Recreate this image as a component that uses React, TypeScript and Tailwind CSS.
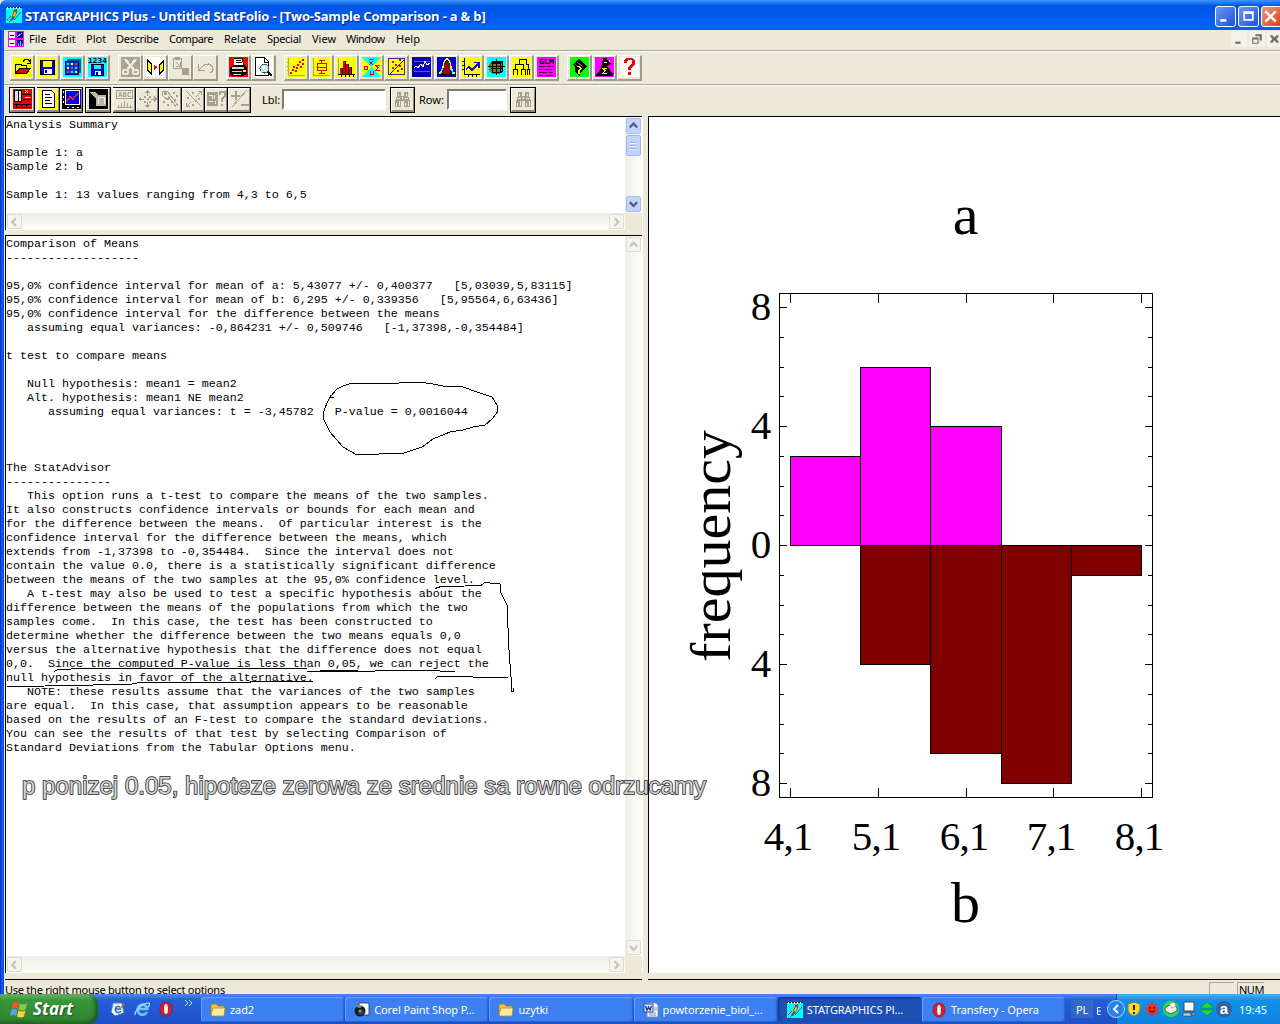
import React from "react";

type Kids = { children?: React.ReactNode };

/* ---------- small drawing helpers ---------- */
const S = ({ d, c = "#000", w = 1 }: { d: string; c?: string; w?: number }) => (
  <path d={d} fill="none" stroke={c} strokeWidth={w} />
);
const F = ({ d, c = "#000" }: { d: string; c?: string }) => <path d={d} fill={c} />;
const R = ({ x, y, w, h, c }: { x: number; y: number; w: number; h: number; c: string }) => (
  <rect x={x} y={y} width={w} height={h} fill={c} />
);
const Tiny = ({ x, y, w, c = "#000", t }: { x: number; y: number; w: number; c?: string; t: string }) => (
  <text x={x} y={y} textLength={w} lengthAdjust="spacingAndGlyphs" fontSize="7" fontWeight="bold" fontFamily="'DejaVu Sans Mono',monospace" fill={c}>{t}</text>
);

const Icon = ({ children, bg }: Kids & { bg?: string }) => (
  <svg width="19" height="20" viewBox="0 0 19 20" shapeRendering="crispEdges" className="block shrink-0">
    {bg && <rect width="19" height="20" fill={bg} />}
    {children}
  </svg>
);

const Logo = () => (
  <svg width="16" height="16" viewBox="0 0 16 16" className="block shrink-0">
    <rect width="16" height="16" fill="#00ffff" />
    <path d="M0 0h16v1H0z" fill="#222" />
    <path d="M1 0h1v2H1zM4 0h1v2H4zM7 0h1v2H7zM10 0h1v2h-1zM13 0h1v2h-1z" fill="#fff" />
    <path d="M1 13l4-4M3 15l5-4M8 13l7-8" stroke="#067" fill="none" />
    <path d="M6 10L8 3l3-1v4l-3 5z" fill="#e81000" />
    <path d="M7 9l2-5 1 2-2 5z" fill="#ffe000" />
    <path d="M4 13l3-4 2 1-3 4z" fill="#555" />
  </svg>
);

const g = "#a5a190";

/* ---------- main toolbar icons ---------- */
const fileIcons = [
  <Icon bg="#ffff00"><F d="M2 17V7h6l1 1h5v4H6z" /><F d="M3 14V8h4l1 1h5v3H6z" c="#ffff00" /><F d="M2 17l4-6h12l-4 6z" /><F d="M4 16l3-4h9l-3 4z" c="#f00000" /><S d="M10 4.500l2-2h3l2 2M17.500 2v4h-4" /></Icon>,
  <Icon bg="#ffff00"><R x={2} y={3} w={15} h={15} c="#000" /><R x={3} y={4} w={13} h={13} c="#0000f0" /><R x={5} y={4} w={9} h={6} c="#ffff00" /><R x={6} y={12} w={8} h={5} c="#fff" /><R x={7} y={13} w={2} h={3} c="#0000a0" /></Icon>,
  <Icon bg="#00ffff"><R x={4} y={2} w={14} h={14} c="#006090" /><R x={2} y={4} w={14} h={14} c="#000080" /><R x={3} y={5} w={12} h={12} c="#0030e0" />
    {[0, 1, 2].map((r) => [0, 1, 2].map((k) => <R key={r + "-" + k} x={4 + k * 4} y={6 + r * 4} w={2} h={2} c={["#00f0ff", "#ffff00", "#ff3030"][(r + k) % 3]} />))}</Icon>,
  <Icon bg="#00ffff"><Tiny x={0} y={5.5} w={19} t="1234" /><R x={3} y={7} w={13} h={12} c="#000" /><R x={4} y={8} w={11} h={10} c="#0000f0" /><R x={6} y={8} w={7} h={4} c="#00ffff" /><R x={7} y={14} w={6} h={4} c="#fff" /><R x={8} y={15} w={2} h={3} c="#0000a0" /></Icon>,
];

const editIcons = [
  <Icon><R x={0} y={0} w={19} h={20} c="#aaa696" /><S d="M4 2l9 11M15 2L6 13" c="#ece9d8" w={2.5} /><circle cx="4.500" cy="15" r="2.500" stroke="#ece9d8" fill="none" strokeWidth="2" /><circle cx="14.500" cy="15" r="2.500" stroke="#ece9d8" fill="none" strokeWidth="2" /></Icon>,
  <Icon bg="#fff"><F d="M1 2l5 5v11l-5-4zM18 2l-5 5v11l5-4z" /><F d="M2 5l3 3v7l-3-2zM17 5l-3 3v7l3-2z" c="#ffff00" /><F d="M8 8l4 2-4 3z" c="#f00" /></Icon>,
  <Icon><S d="M2.500 1.500h8v10h-8zM4.500.500h4v2h-4zM5 5l4 4M9 5v4H5" c={g} /><R x={11} y={11} w={7} h={7} c={g} /></Icon>,
  <Icon><S d="M2.500 7v6.500H9M3 13l5-5 5-1 3 2 1 3-1 3-2 1" c={g} w={1.3} /></Icon>,
];

const printIcons = [
  <Icon bg="#ff0000"><F d="M5 2l8-1 2 8H5z" c="#fff" /><S d="M5 2l8-1 2 8M7 4l5-1M7 6l6-1" /><F d="M1 11l4-3h11l2 3v6l-4 2H3l-2-3z" /><F d="M3 10h12v2H3zM3 14h10v1H3zM4 17h8v1H4z" c="#d8d4c8" /><R x={14} y={13} w={3} h={2} c="#ffff00" /></Icon>,
  <Icon bg="#fff"><S d="M1.500.500h9l4 4v14h-13zM10.500 1v4h4" /><circle cx="10.500" cy="11.500" r="4.500" fill="#c0f0f0" stroke="#555" /><circle cx="9.500" cy="10.500" r="1.500" fill="#fff" /><S d="M14 15l4 4" w={2} /></Icon>,
];

const Y = "#ffff00";
const plotIcons = [
  <Icon bg={Y}><S d="M1.500 1v17.500H18M0 5h2M0 9h2M0 13h2" c={g} />{[[3, 15], [5, 12], [8, 13], [6, 9], [9, 10], [10, 7], [13, 9], [12, 4], [15, 6], [15, 2]].map(([x, y], i) => <R key={i} x={x} y={y} w={2} h={2} c="#e80000" />)}</Icon>,
  <Icon bg={Y}><S d="M1.500 1v17.500H18" c={g} /><S d="M5.500 6.500h9v7h-9zM5 10.500h10M9.500 3v4M9.500 14v3M7 3.500h6M7 16.500h6" c="#e80000" /></Icon>,
  <Icon bg={Y}><R x={3} y={11} w={3} h={6} c="#e00000" /><R x={6} y={4} w={3} h={13} c="#e00000" /><R x={9} y={7} w={3} h={10} c="#e00000" /><R x={12} y={10} w={3} h={7} c="#e00000" /><S d="M1.500 1v17" c={g} /><S d="M1 17.500h17M5.500 11v6M8.500 4v13M11.500 7v10M14.500 10v7M4.500 18v2M8.500 18v2M12.500 18v2M16.500 18v2" /></Icon>,
  <Icon bg="#00ffff"><F d="M0 0l9 10L0 20zM19 0l-9 10 9 10z" c={Y} /><S d="M7 2.500h5M7 4l4 4M11 4L7 8M1.500 9.500h4v3h-3v-3M18 8.500h-4l2 2-2 3h4M8.500 14v5M8 17.500h3.500V14" c="#e80000" /></Icon>,
  <Icon bg={Y}><S d="M1.500 1.500h16v16h-16z" c="#303090" /><S d="M3 17L17 3" c="#101010" />{[[5, 4], [8, 7], [12, 2], [5, 10], [12, 8], [14, 11], [10, 13]].map(([x, y], i) => <R key={i} x={x} y={y} w={2} h={2} c="#e80000" />)}</Icon>,
  <Icon bg="#0000c8"><S d="M2 4.500h16M2 14.500h16" c="#ff2020" /><S d="M2 11l2-2 2 2 3-4 2 3 2-6 2 4 3-2" c="#fff" /><S d="M1.500 1v17.500H18M5.500 18v2M9.500 18v2M13.500 18v2" /></Icon>,
  <Icon bg="#0000d8"><F d="M6 17v-6l2-5 2-2 2 2 1 5v6z" c="#a00000" /><S d="M2 16h2l2-6 1-5 2-3h2l2 3 1 5 2 6h2" c={Y} w={1.3} /><S d="M3 16l3-5M16 16l-3-5" c="#00ffff" /><S d="M1 17.500h17M4.500 18v2M8.500 18v2M12.500 18v2M16.500 18v2" /></Icon>,
  <Icon bg={Y}><S d="M2.500 1v16.500H18M0 4.500h2M0 8.500h2M0 12.500h2M6.500 18v2M10.500 18v2M14.500 18v2" /><S d="M4 12l3-2 3 3 6-6M12 5.500h5v5" c="#1010d0" w={1.6} /></Icon>,
  <Icon bg="#00ffff"><F d="M5 4h9l2 3v8l-4 2H5l-3-3V7z" c="#808000" /><S d="M5.500 6.500h8v9h-8zM3.500 5.500h10l2-1M15.500 4v10l-2 2M4 11.500h12M9.500 2v16M1 9.500h17M5.500 6v-2h9" /></Icon>,
  <Icon bg={Y}><S d="M7.500 8V2.500h7V8M3.500 12V7.500h8V12M1.500 18v-5.500h4V18M9.500 18v-5.500h4V18M14.500 7.500h2v5M15.500 18v-5.500h2V18" /></Icon>,
  <Icon bg="#ff00ff"><Tiny x={2} y={6.5} w={15} t="GLM" /><S d="M2 9.500h6M10 9.500h7M2 12.500h3M7 12.500h8M2 15.500h8M12 15.500h4M2 18.500h4M8 18.500h8" c="#400040" /></Icon>,
];

const helpIcons = [
  <Icon bg="#00ff00"><F d="M2 8l7-6 8 7-7 7v3l-5-4V9z" /><S d="M7 5l6 5M5 7l3 3" c="#606060" /><S d="M7 9.500h2l2 2-2 2v3" c={Y} w={1.4} /></Icon>,
  <Icon bg="#ff00ff"><F d="M8 1h4l1 3 3 3-4 2 3 4 3 4v2H1v-2l4-4 2-5z" /><S d="M12 11.500H8l2 2-2 3h4" c={Y} /><S d="M9 5.500h3M14.500 3v2" c="#fff" /></Icon>,
  <Icon bg="#fff"><F d="M4 6V3l2-2h6l3 2v5l-4 3v2H8v-3l4-3V4l-1-1H8L7 4v2zM8 15h3v3H8z" c="#f00000" /></Icon>,
];

/* ---------- analysis toolbar icons ---------- */
const analysisIcons = [
  <Icon bg="#e00000"><R x={1} y={1} w={8} h={12} c="#ddd" /><S d="M1.500 1.500h7v11h-7zM5.500 2v10M10 5.500h8M10 10.500h8M1 15.500h17M3.500 15v4M8.500 15v4M13.500 15v4M4 18.500h3M9 18.500h3M15 18.500h3" /><S d="M12 1l3 3M15 1l-3 3M12 8h5" c={Y} /></Icon>,
  <Icon bg={Y}><F d="M3 1h10l3 3v15H3z" c="#fff" /><S d="M3.500 1.500h9l3 3v14h-12zM6 5.500h5M6 8.500h7M6 11.500h5M6 14.500h7" /></Icon>,
  <Icon bg="#0000f0"><S d="M3.500 1v14.500H18M3.500 1.500h14v14" c="#fff" /><R x={0} y={0} w={3} h={20} c="#000" /><R x={0} y={16} w={19} h={4} c="#000" /><S d="M1.500 2v2M1.500 7v2M1.500 12v2M5 18.500h2M10 18.500h2M15 18.500h2" c="#fff" /><S d="M5 12l3-4 3 2 5-6" c="#ff2020" w={1.6} /></Icon>,
  <Icon bg="#000"><F d="M1 3h6l2 3h8v11H7v-8L3 6z" c="#bbb8aa" /><S d="M9 8.500h6v6M9 8v7" c="#eee" /></Icon>,
  <Icon><S d="M1.500 1.500h16v8h-16z" c={g} /><Tiny x={3} y={8} w={13} t="ABC" c={g} /><S d="M2 18.500h16M3.500 16v2M6.500 14v4M9.500 12v6M12.500 14v4M15.500 16v2" c={g} /></Icon>,
  <Icon><F d="M9 1l3 3H7zM9 19l3-3H7zM0 10l3-3v6zM19 10l-3-3v6zM9 4h1v3H9zM9 13h1v3H9zM3 10h3v1H3zM13 10h3v1h-3zM6 7h2v2H6zM11 7h2v2h-2zM6 12h2v2H6zM11 12h2v2h-2zM9 9h2v2H9z" c={g} /></Icon>,
  <Icon><S d="M1 2h5l4 5-3 4-5-4zM7 7l8 11M10 7l7 10" c={g} /><F d="M3 3h3v3H3zM2 12h2v2H2zM6 15h2v2H6zM12 3h2v2h-2zM15 6h2v2h-2zM13 10h2v2h-2zM10 12h2v2h-2zM5 9h2v2H5z" c={g} /></Icon>,
  <Icon><S d="M2 2l15 15M2 17.500h4M2.500 14v4M3 17l4-4M17.500 2v4M14 2.500h4M12 8l5-5" c={g} /><F d="M8 3h2v2H8zM14 9h2v2h-2zM3 8h2v2H3zM8 15h2v2H8zM11 11h2v2h-2z" c={g} /></Icon>,
  <Icon><R x={0} y={3} w={11} h={14} c={g} /><S d="M2 6.500h3v3M7.500 6v4M2 12.500h4M8.500 12v3" c="#ece9d8" /><S d="M13 6V3h5v4l-3 3v3M15 15v2" c={g} w={2} /></Icon>,
  <Icon><S d="M5.500 2v9M1 6.500h9M11 15.500h8" c={g} w={2} /><S d="M17 1L2 18" c={g} /></Icon>,
];

const Binoculars = () => (
  <Icon><F d="M4 3h4v4h3V3h4v4l2 5v6h-6v-6H8v6H2v-6l2-5z" c={g} /><S d="M5.500 5v2M4 9.500h3M3.500 14v3M6.500 12v5M13.500 5v2M12 9.500h3M12.500 14v3M15.500 12v5M9.500 8v2" c="#ece9d8" /></Icon>
);

const ToolButton = ({ children }: Kids) => (
  <div className="flex h-[26px] w-[25px] items-center justify-center border-t border-r-2 border-b-2 border-l border-t-white border-r-[#9d9a8b] border-b-[#9d9a8b] border-l-white">
    {children}
  </div>
);

const FlatButton = ({ children, className = "w-[23px]" }: Kids & { className?: string }) => (
  <div className={`flex h-[26px] shrink-0 items-center justify-center overflow-hidden border-y border-r border-black ${className}`}>
    <div className="flex h-full w-full items-center justify-center border-t border-r border-b-2 border-l border-t-white border-r-[#8c897b] border-b-[#8c897b] border-l-white">
      {children}
    </div>
  </div>
);

const menus: [string, string][] = [
  ["File", "w-[27px]"], ["Edit", "w-[30px]"], ["Plot", "w-[30px]"], ["Describe", "w-[53px] tracking-[-0.3px]"], ["Compare", "w-[55px] tracking-[-0.5px]"],
  ["Relate", "w-[43px]"], ["Special", "w-[45px] tracking-[-0.3px]"], ["View", "w-[34px]"], ["Window", "w-[50px] tracking-[-0.5px]"], ["Help", "w-[30px]"],
];

/* ---------- scrollbars ---------- */
type Dir = "up" | "down" | "left" | "right";
const chevrons: Record<Dir, string> = {
  up: "M4 9.500l4-4 4 4", down: "M4 6l4 4 4-4", left: "M9.500 4l-4 4 4 4", right: "M6 4l4 4-4 4",
};
const Arrow = ({ dir, off }: { dir: Dir; off?: boolean }) => (
  <div className={off ? "h-[15px] w-[15px] shrink-0 rounded-[2px] border border-[#dddbd0] bg-[#f4f3ec]" : "h-[16px] w-[15px] shrink-0 rounded-[2px] border border-[#a9bdf0] bg-[#c3d3fd]"}>
    <svg width="13" height="14" viewBox="1 1 14 14"><path d={chevrons[dir]} fill="none" stroke={off ? "#c5c3b8" : "#4d6185"} strokeWidth="2.400" /></svg>
  </div>
);
const VScroll = ({ active }: { active?: boolean }) => (
  <div className="flex w-[17px] shrink-0 flex-col items-center justify-between bg-gradient-to-r from-[#eeede5] to-[#fefefb] py-px">
    <div className="flex flex-col items-center gap-px">
      <Arrow dir="up" off={!active} />
      {active && (
        <div className="flex h-[21px] w-[15px] flex-col items-center justify-center gap-px rounded-[2px] border border-[#9eb5ee] bg-[#c3d3fd]">
          <i className="h-px w-[7px] bg-[#8cb0f8] shadow-[0_1px_#eef4fe]" />
          <i className="mt-px h-px w-[7px] bg-[#8cb0f8] shadow-[0_1px_#eef4fe]" />
          <i className="mt-px h-px w-[7px] bg-[#8cb0f8] shadow-[0_1px_#eef4fe]" />
        </div>
      )}
    </div>
    <Arrow dir="down" off={!active} />
  </div>
);
const HScroll = () => (
  <div className="flex h-[17px] shrink-0 bg-[#ece9d8]">
    <div className="flex flex-1 items-center justify-between bg-gradient-to-b from-[#eeede5] to-[#fefefb] px-px">
      <Arrow dir="left" off />
      <Arrow dir="right" off />
    </div>
    <div className="w-[17px]" />
  </div>
);

const TextPane = ({ text, active, className }: { text: string; active?: boolean; className: string }) => (
  <div className={`flex w-[637px] flex-col border-t border-l border-t-black border-l-black bg-white ${className}`}>
    <div className="flex min-h-0 flex-1">
      <pre className="min-w-0 flex-1 overflow-hidden pt-px font-['Liberation_Mono',monospace] text-[11.67px] leading-[14px] text-black">{text}</pre>
      <VScroll active={active} />
    </div>
    <HScroll />
  </div>
);

const summary = `Analysis Summary

Sample 1: a
Sample 2: b

Sample 1: 13 values ranging from 4,3 to 6,5`;

const comparison = `Comparison of Means
-------------------

95,0% confidence interval for mean of a: 5,43077 +/- 0,400377   [5,03039,5,83115]
95,0% confidence interval for mean of b: 6,295 +/- 0,339356   [5,95564,6,63436]
95,0% confidence interval for the difference between the means
   assuming equal variances: -0,864231 +/- 0,509746   [-1,37398,-0,354484]

t test to compare means

   Null hypothesis: mean1 = mean2
   Alt. hypothesis: mean1 NE mean2
      assuming equal variances: t = -3,45782   P-value = 0,0016044



The StatAdvisor
---------------
   This option runs a t-test to compare the means of the two samples.
It also constructs confidence intervals or bounds for each mean and
for the difference between the means.  Of particular interest is the
confidence interval for the difference between the means, which
extends from -1,37398 to -0,354484.  Since the interval does not
contain the value 0.0, there is a statistically significant difference
between the means of the two samples at the 95,0% confidence level.
   A t-test may also be used to test a specific hypothesis about the
difference between the means of the populations from which the two
samples come.  In this case, the test has been constructed to
determine whether the difference between the two means equals 0,0
versus the alternative hypothesis that the difference does not equal
0,0.  Since the computed P-value is less than 0,05, we can reject the
null hypothesis in favor of the alternative.
   NOTE: these results assume that the variances of the two samples
are equal.  In this case, that assumption appears to be reasonable
based on the results of an F-test to compare the standard deviations.
You can see the results of that test by selecting Comparison of
Standard Deviations from the Tabular Options menu.`;

/* ---------- histogram ---------- */
const edges = [790, 860, 930, 1001, 1071, 1141];
const topBars = [3, 6, 4, 0, 0];
const bottomBars = [0, 4, 7, 8, 1];
const ZERO = 545;
const UNIT = 29.75;
const xTicks: [number, string][] = [[790, "4,1"], [878, "5,1"], [966, "6,1"], [1053, "7,1"], [1141, "8,1"]];

const Histogram = () => (
  <svg viewBox="649 117 631 856" width="631" height="856" className="block" fontFamily="'Liberation Serif',serif">
    <g shapeRendering="crispEdges" stroke="#000" strokeWidth="1">
      <rect x="779.500" y="293.500" width="373" height="504" fill="none" />
      {topBars.map((v, i) => v > 0 && (
        <rect key={i} x={edges[i] + 0.5} y={Math.round(ZERO - v * UNIT) + 0.5} width={edges[i + 1] - edges[i]} height={Math.round(v * UNIT)} fill="#ff00ff" />
      ))}
      {bottomBars.map((v, i) => v > 0 && (
        <rect key={i} x={edges[i] + 0.5} y={ZERO + 0.5} width={edges[i + 1] - edges[i]} height={Math.round(v * UNIT)} fill="#800000" />
      ))}
      {xTicks.map(([x]) => <path key={x} d={`M${x + 0.5} 293v10M${x + 0.5} 788v10`} />)}
      {Array.from({ length: 17 }, (_, i) => {
        const y = Math.round(307 + i * UNIT) + 0.5;
        const l = i % 4 === 0 ? 7 : 4;
        return <path key={i} d={`M780 ${y}h${l}M1152 ${y}h${-l}`} />;
      })}
    </g>
    <g fontSize="41" textAnchor="middle">
      {["8", "4", "0", "4", "8"].map((t, i) => <text key={i} x="761" y={320 + i * 119}>{t}</text>)}
      {xTicks.map(([x, t]) => <text key={x} x={x - 1.5} y="849.500" textLength="49.500">{t}</text>)}
    </g>
    <g fontSize="58" textAnchor="middle">
      <text x="965.500" y="234">a</text>
      <text x="965.500" y="922">b</text>
      <text transform="translate(730 546) rotate(-90)">frequency</text>
    </g>
  </svg>
);

const Annotations = () => (
  <svg width="720" height="440" viewBox="0 370 720 440" className="pointer-events-none absolute top-[370px] left-0">
    <g fill="none" stroke="#000" strokeWidth="1" shapeRendering="crispEdges">
      <path d="M330 397.500h4M331 396L337 389 343 386 350 383.500 398 383.500 400 382.500 422 382.500 433 384 445 386.500 463 387 477 392 492 397 497 405 497.500 412 492 419 485 425 473 427 463 430 450 432 433 439 422 447 403 453.500 356 454.500 343 447 330 432 324 420 323.500 412 327 403 331 395" />
      <path d="M435 588.500L441 586.500 465 586 481 585.500 485 582.500 500 584 501 593 507 605 509 650 511 677 512 691.500 513 691.500 513 688" />
      <path d="M54 671.500L58 669.500 85 668.500 307 668.500M307 671.500H370L380 670.500 424 670.500 455 671.500M320 670.500H358" />
      <path d="M7 686.500L83 685.500 104 684.500 129 684.500 140 682.500 248 682.500 253 681.500 313 681.500M435 678.500L438 676.500 465 676.500 481 677.500H508" />
    </g>
    <text x="22" y="794" textLength="684" lengthAdjust="spacingAndGlyphs" fontFamily="'Liberation Sans',sans-serif" fontSize="23.500" fill="#d0d0d0" stroke="#262626" strokeWidth="1.500" paintOrder="stroke">
      p ponizej 0.05, hipoteze zerowa ze srednie sa rowne odrzucamy
    </text>
  </svg>
);

/* ---------- taskbar ---------- */
const Folder = () => (
  <svg width="16" height="16" viewBox="0 0 16 16" className="shrink-0"><path d="M1 3l1-1h4l2 2h6v9H2L1 12z" fill="#f3c74a" stroke="#9a7412" strokeWidth=".8" /><path d="M1 13l2-7h12l-1 8H2z" fill="#ffec9a" stroke="#b18a25" strokeWidth=".8" /></svg>
);
const Opera = () => (
  <svg width="16" height="16" viewBox="0 0 16 16" className="shrink-0"><path d="M8 1c4 0 6 3 6 7s-2 7-6 7-6-3-6-7 2-7 6-7zm0 2C6.500 3 6 5 6 8s.5 5 2 5 2-2 2-5-.5-5-2-5z" fill="#d8202a" fillRule="evenodd" stroke="#8e0c14" strokeWidth=".6" /><path d="M8 3c1.500 0 2 2 2 5s-.5 5-2 5-2-2-2-5 .5-5 2-5z" fill="#e8eefc" /></svg>
);
const Paint = () => (
  <svg width="16" height="16" viewBox="0 0 16 16" className="shrink-0"><path d="M5 1h10v12H5z" fill="#fff" stroke="#446" /><circle cx="6" cy="9" r="5.500" fill="#1a1a1a" /><circle cx="7" cy="10" r="3" fill="#246" /><circle cx="6" cy="9" r="1.300" fill="#7b5" /><path d="M2 5l3-2 4 1-3 2z" fill="#888" /></svg>
);
const Word = () => (
  <svg width="16" height="16" viewBox="0 0 16 16" className="shrink-0"><path d="M4 1h9l2 2v12H4z" fill="#fff" stroke="#7a8bb0" /><path d="M11 6h3M11 8h3M6 11h7M6 13h7" stroke="#7a8bb0" /><path d="M1 2h9v8H1z" fill="#dfe9fb" stroke="#2a51a3" /><path d="M2.500 4l1.500 4 1.500-3L7 8l1.500-4" fill="none" stroke="#1c3f94" strokeWidth="1.400" /></svg>
);
const IE = () => (
  <svg width="16" height="16" viewBox="0 0 16 16" className="shrink-0"><path d="M13 11a5 5 0 1 1 .5-3H5" fill="none" stroke="#6fc3ff" strokeWidth="2.600" /><path d="M1 14C0 11 8 2 15 2c1 1 0 3-1 4" fill="none" stroke="#b8e4ff" strokeWidth="1.200" /></svg>
);
const Desktop = () => (
  <svg width="16" height="16" viewBox="0 0 16 16" className="shrink-0"><path d="M3 2h9l2 10-9 3-4-4z" fill="#e8f4ff" stroke="#3b83c8" /><path d="M10 6a3 3 0 1 0 1 4M6 8h5" fill="none" stroke="#1b74c4" strokeWidth="1.500" /><path d="M9 8l5-6 1 1-5 6z" fill="#e06020" /></svg>
);
const tasks: [string, React.ReactNode, boolean][] = [
  ["zad2", <Folder />, false], ["Corel Paint Shop P...", <Paint />, false], ["uzytki", <Folder />, false],
  ["powtorzenie_biol_...", <Word />, false], ["STATGRAPHICS Pl...", <Logo />, true], ["Transfery - Opera", <Opera />, false],
];

const Taskbar = () => (
  <div className="flex h-[30px] shrink-0 bg-gradient-to-b from-[#4a8df5] via-[#245edb] via-20% to-[#1f4fc4] text-[11px] text-white">
    <div className="flex w-[98px] items-center gap-1 rounded-r-[10px] bg-gradient-to-b from-[#68b868] via-[#3a963a] via-20% to-[#2f822f] pl-2.5 shadow-[inset_-3px_-2px_4px_#1d5c1d]">
      <svg width="19" height="19" viewBox="0 0 19 19">
        <path d="M3 3c2-1.500 4-1.500 6 0L7.500 9c-2-1.200-4-1.200-6 0z" fill="#f0562a" /><path d="M10 3.500c2 1.300 4 1.300 7 0L15.500 9.500c-2 1.200-4.500 1.200-7 0z" fill="#86cc3c" />
        <path d="M1.300 10c2-1.200 4-1.200 6 0L6 16c-2-1.300-4-1.300-6 0z" fill="#5a9cf5" /><path d="M8.300 10.500c2 1.300 4.500 1.300 7 0L14 16.500c-2 1.300-4.500 1.300-7 0z" fill="#ffd23a" />
      </svg>
      <span className="pb-px font-['Open_Sans',sans-serif] text-[17px] leading-none font-bold italic [text-shadow:1px_1px_2px_#1c4a1c]">Start</span>
    </div>
    <div className="flex w-[103px] items-center pl-[12px]">
      <div className="flex gap-[8px]"><Desktop /><IE /><Opera /></div>
      <svg width="10" height="8" viewBox="0 0 10 8" className="mb-3 ml-[10px]"><path d="M1 1l3 3-3 3M5 1l3 3-3 3" fill="none" stroke="#cfe0ff" /></svg>
    </div>
    <div className="flex gap-px pt-[3px] pb-[2px]">
      {tasks.map(([t, ic, on]) => (
        <div key={t} className={`flex h-[25px] w-[143.200px] items-center gap-[4px] rounded-[3px] pl-[9px] whitespace-nowrap ${on ? "bg-[#1e4fb4] shadow-[inset_1px_1px_2px_#12357f]" : "bg-[#3c80f2] shadow-[inset_1px_1px_1px_#6aa2fa,inset_-1px_-1px_1px_#2a62cc]"}`}>
          {ic}<span className="tracking-[-0.1px]">{t}</span>
        </div>
      ))}
    </div>
    <div className="flex flex-1 items-center pl-[6px]">
      <span className="flex h-[18px] w-[22px] items-center justify-center bg-[#316ac5]">PL</span>
      <svg width="4" height="9" viewBox="0 0 4 9" className="mt-1 ml-[4px]"><path d="M3.500.5h-3v7h3M1 4h3" fill="none" stroke="#fff" /></svg>
    </div>
    <div className="flex w-[164px] items-center border-l border-[#0a4db0] bg-gradient-to-b from-[#3fb2f8] via-[#1191ea] via-20% to-[#0f83dc]">
      <svg width="109" height="20" viewBox="0 0 109 20" className="-ml-[10px] shrink-0">
        <circle cx="9" cy="10" r="8.500" fill="#2a80f0" stroke="#a8d4ff" /><path d="M11 6l-4 4 4 4" fill="none" stroke="#fff" strokeWidth="2" />
        <path d="M27 3l6 2v5c0 4-3 6-6 7-3-1-6-3-6-7V5z" fill="#ffd820" stroke="#777" /><path d="M27 6v5M27 13v2" stroke="#222" strokeWidth="2" />
        <path d="M45 2l1.500 4 4-2-1.500 4 3 2-3 2 1.500 4-4-1.500L45 18l-1.500-3.500-4 1.500 1.500-4-3-2 3-2-1.500-4 4 2z" fill="#f03010" /><path d="M42 9h2M46 9h2M42 12l3 1 3-1" stroke="#400" fill="none" />
        <circle cx="64" cy="10" r="8" fill="#20e838" /><path d="M58 9l6-4 6 3v4l-6 3-6-3z" fill="#eee" stroke="#555" /><path d="M62 5l5-2 2 4-4 2z" fill="#fff" stroke="#777" strokeWidth=".6" />
        <path d="M77 3h10v9H77z" fill="#fff" stroke="#444" /><path d="M76 14h8v3h-8zM85 14h3v2h-3z" fill="#ccc" stroke="#333" strokeWidth=".6" />
        <path d="M100 3l6.500 6h-13zM100 17l6.500-6h-13z" fill="#18e030" stroke="#0a8a1a" strokeWidth=".5" />
      </svg>
      <span className="flex h-[16px] w-[16px] shrink-0 items-center justify-center rounded-full bg-[#35629c] pb-px font-['Liberation_Sans',sans-serif] text-[15px] leading-none font-bold">a</span>
      <span className="ml-[7px]">19:45</span>
    </div>
  </div>
);

const windowGlyphs = ["M5 14h7v3H5z", "M5 5h12v11H5zM7 8v6h8V8z", "M5 4l5 5 5-5 2 2-5 5 5 5-2 2-5-5-5 5-2-2 5-5-5-5z"];

export default function App() {
  return (
    <div className="relative flex h-[1024px] w-[1280px] flex-col overflow-hidden bg-[#ece9d8] font-['Noto_Sans',sans-serif] text-[11px] leading-none text-black">
      <header className="flex h-[30px] shrink-0 items-center overflow-hidden rounded-tl-[6px] bg-gradient-to-b from-[#3d95ff] via-[#0054e3] via-20% to-[#0062ff] pl-[6px]">
        <Logo />
        <h1 className="ml-[3px] flex-1 pt-[3px] font-['Open_Sans',sans-serif] text-[13px] font-bold tracking-[-0.200px] whitespace-nowrap text-white [text-shadow:1px_1px_#0a2a80]">
          STATGRAPHICS Plus - Untitled StatFolio - [Two-Sample Comparison - a &amp; b]
        </h1>
        <div className="-mr-[2px] flex shrink-0 gap-[2px] pt-[3px]">
          {windowGlyphs.map((d, i) => (
            <div key={i} className={`h-[21px] w-[21px] rounded-[3px] border border-white ${i === 2 ? "bg-gradient-to-br from-[#f0957c] to-[#d83c10]" : "bg-gradient-to-br from-[#6d97f5] to-[#1c50da]"}`}>
              <svg width="19" height="19" viewBox="0 0 22 22"><path d={d} fill="#fff" fillRule="evenodd" /></svg>
            </div>
          ))}
        </div>
      </header>

      <div className="flex min-h-0 flex-1">
        <div className="w-[4px] shrink-0 bg-gradient-to-r from-[#0020c8] via-[#1660f0] to-[#0048e0]" />
        <div className="flex min-w-0 flex-1 flex-col">
          <nav className="flex h-[20px] shrink-0 items-center pl-[4px]">
            <svg width="16" height="16" viewBox="0 0 16 16" shapeRendering="crispEdges" className="mr-[5px] mb-[2px] shrink-0">
              <rect width="16" height="16" fill="#ff00ff" /><path d="M1 1h6v6H1zM1 9h6v6H1z" fill="#fff" /><path d="M9 1h6v6H9zM9 9h6v6H9z" fill="#000080" />
              <path d="M2 4.500h4M2 12.500h4" stroke="#000" /><path d="M9 6l5-4M10.500 15v-3M12.500 15v-5M14.500 15v-2" stroke="#00ffff" />
            </svg>
            {menus.map(([m, w]) => <span key={m} className={`shrink-0 pb-[3px] whitespace-nowrap ${w}`}>{m}</span>)}
            <div className="-mr-[3px] ml-auto flex gap-[2px] pb-[2px]">
              {["M4 10h5v2H4z", "M6 3h6v6h-2V5H6zM3 6h6v6H3zM4 8v3h4V8z", "M3 4h2l2 2 2-2h2v1L9 7.500 11 10v1H9L7 9l-2 2H3v-1l2-2.500L3 5z"].map((d) => (
                <svg key={d} width="16" height="16" viewBox="0 0 15 15"><rect width="15" height="15" fill="#f3f1e8" /><path d={d} fill="#716f64" fillRule="evenodd" /></svg>
              ))}
            </div>
          </nav>

          <div className="flex h-[35px] shrink-0 items-center gap-[8px] border-y border-t-[#aca899] border-b-[#aca899] pl-[6px] shadow-[inset_0_1px_#fff,0_1px_#fff]">
            {[fileIcons, editIcons, printIcons, plotIcons, helpIcons].map((grp, i) => (
              <div key={i} className="flex">{grp.map((ic, k) => <ToolButton key={k}>{ic}</ToolButton>)}</div>
            ))}
          </div>

          <div className="flex h-[31px] shrink-0 items-center pb-[2px] pl-[5px]">
            <FlatButton className="w-[26px] border-l">{analysisIcons[0]}</FlatButton>
            <div className="ml-[2px] flex">{analysisIcons.slice(1, 3).map((ic, i) => <FlatButton key={i}>{ic}</FlatButton>)}</div>
            <div className="mr-[2px] ml-[2px]"><FlatButton className="w-[26px] border-l">{analysisIcons[3]}</FlatButton></div>
            <div className="flex">{analysisIcons.slice(4).map((ic, i) => <FlatButton key={i}>{ic}</FlatButton>)}</div>
            <span className="ml-[11px] w-[20px]">Lbl:</span>
            <div className="h-[21px] w-[104px] border-2 border-t-[#7f7c70] border-r-white border-b-white border-l-[#7f7c70] bg-white" />
            <div className="ml-[4px]"><FlatButton className="w-[25px] border-l"><Binoculars /></FlatButton></div>
            <span className="ml-[4px] w-[28px]">Row:</span>
            <div className="h-[21px] w-[60px] border-2 border-t-[#7f7c70] border-r-white border-b-white border-l-[#7f7c70] bg-white" />
            <div className="ml-[3px]"><FlatButton className="w-[26px] border-l"><Binoculars /></FlatButton></div>
          </div>

          <main className="flex h-[857px] shrink-0 gap-[5px]">
            <div className="flex w-[639px] flex-col gap-[5px] border-r border-white pl-px">
              <TextPane text={summary} active className="h-[114px]" />
              <TextPane text={comparison} className="h-[738px]" />
            </div>
            <div className="w-[632px] border-t border-l border-black bg-white"><Histogram /></div>
          </main>

          <footer className="flex min-h-0 flex-1 flex-col pt-[6px]">
            <div className="flex gap-[6px] pl-px"><div className="h-px w-[637px] bg-black" /><div className="h-px flex-1 bg-black" /></div>
            <div className="flex flex-1 justify-between pt-[2px] pl-[1px]">
              <span className="pt-[2px] tracking-[-0.25px]">Use the right mouse button to select options</span>
              <div className="flex gap-[3px] pr-[16px]">
                <div className="h-[12px] w-[25px] border-t border-l border-[#aca899]" />
                <div className="h-[12px] w-[27px] border-t border-l border-[#aca899] pt-px pl-px tracking-[-0.5px]">NUM</div>
              </div>
            </div>
          </footer>
        </div>
      </div>
      <Taskbar />
      <Annotations />
    </div>
  );
}
